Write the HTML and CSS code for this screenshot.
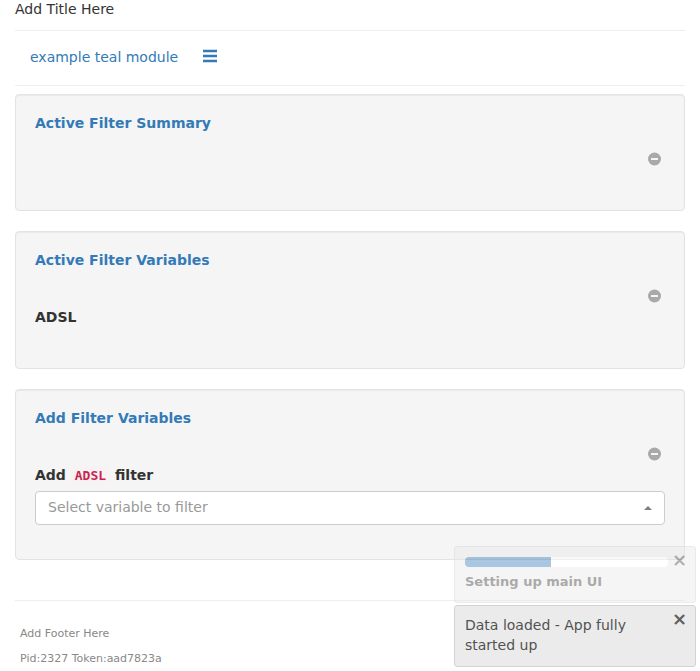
FILE: index.html
```html
<!DOCTYPE html>
<html lang="en">
<head>
<meta charset="utf-8">
<title>Teal app</title>
<link rel="stylesheet" href="styles.css">
</head>
<body>
<div class="page">
  <header>Add Title Here</header>
  <hr>
  <nav class="tabs">
    <a class="tab">example teal module</a>
    <a class="burger" aria-label="Toggle filter panel"><svg width="14" height="14" viewBox="0 0 14 14"><path d="M0 2h14M0 7h14M0 12h14"/></svg></a>
  </nav>
  <section class="well summary">
    <h2>Active Filter Summary</h2>
    <svg class="minus" width="14" height="14" viewBox="0 0 14 14"><circle cx="6.5" cy="7" r="6.5"/><path d="M3 7h7"/></svg>
  </section>
  <section class="well active">
    <h2>Active Filter Variables</h2>
    <svg class="minus" width="14" height="14" viewBox="0 0 14 14"><circle cx="6.5" cy="7" r="6.5"/><path d="M3 7h7"/></svg>
    <div class="label">ADSL</div>
  </section>
  <section class="well add">
    <h2>Add Filter Variables</h2>
    <svg class="minus" width="14" height="14" viewBox="0 0 14 14"><circle cx="6.5" cy="7" r="6.5"/><path d="M3 7h7"/></svg>
    <div class="label">Add <code>ADSL</code> filter</div>
    <div class="select"><span>Select variable to filter</span><i class="caret"></i></div>
  </section>
  <hr class="foot-rule">
  <footer><p>Add Footer Here</p><p>Pid:2327 Token:aad7823a</p></footer>
</div>
<div class="notifications">
  <div class="note fading">
    <div class="track"><div class="bar"></div></div>
    <strong>Setting up main UI</strong>
    <span class="close">×</span>
  </div>
  <div class="note">Data loaded - App fully started up<span class="close">×</span></div>
</div>
</body>
</html>
```
FILE: styles.css
```css
* { box-sizing: border-box; }
body { margin: 0; font: 14px/20px "DejaVu Sans", sans-serif; color: #333; background: #fff; height: 671px; overflow: hidden; }
.page { padding: 0 15px; }
header { height: 30px; line-height: 18px; }
hr { margin: 0; border: 0; border-top: 1px solid #eee; }
.tabs { display: flex; height: 55px; border-bottom: 1px solid #eee; color: #337ab7; padding: 16px 15px 0; gap: 25px; }
.burger svg { display: block; margin-top: 2px; }
.burger path { stroke: #337ab7; stroke-width: 2.3; fill: none; }
.well { display: flex; flex-direction: column; background: #f5f5f5; border: 1px solid #e3e3e3; border-radius: 4px; padding: 18px 19px 19px; box-shadow: inset 0 1px 1px rgba(0,0,0,.05); margin-bottom: 20px; }
.summary { height: 117px; margin-top: 8px; }
.active { height: 138px; }
.add { height: 171px; margin-bottom: 40px; }
h2 { margin: 0; font-size: 14px; line-height: 20px; color: #337ab7; }
.minus { align-self: flex-end; margin: 19px 3px 0 0; flex: none; }
.minus circle { fill: #a9a9a9; }
.minus path { stroke: #f5f5f5; stroke-width: 2; }
.label { font-weight: 700; line-height: 20px; margin-top: 4px; }
.label code { font: 700 13px "DejaVu Sans Mono", monospace; color: #c7254e; background: #f9f2f4; padding: 2px 4px; border-radius: 4px; }
.select { display: flex; align-items: center; justify-content: space-between; height: 34px; flex: none; margin-top: 6px; padding: 0 12px; border: 1px solid #ccc; border-radius: 4px; background: #fff; color: #999; }
.select span { margin-top: -2px; }
.caret { border: 4px solid transparent; border-top: 0; border-bottom-color: #808080; }
footer { padding: 21px 5px 0; font-size: 11px; color: #888; }
footer p { margin: 0; height: 25px; line-height: 24px; }
.notifications { position: fixed; right: 4px; bottom: 4px; width: 242px; }
.note { position: relative; height: 62px; padding: 9px 40px 10px 10px; margin-top: 2px; border: 1px solid #ccc; border-radius: 3px; background: #e8e8e8; color: #333; opacity: .85; }
.fading { height: 57px; opacity: .42; padding: 10px 27px 10px 10px; }
.track { height: 10px; border-radius: 4px; background: #fff; overflow: hidden; }
.bar { width: 86px; height: 10px; background: #337ab7; }
.fading strong { display: block; margin-top: 5px; font-size: 13px; }
.close { position: absolute; top: 3px; right: 8px; font-size: 18px; font-weight: 700; line-height: 20px; color: #444; }
```
